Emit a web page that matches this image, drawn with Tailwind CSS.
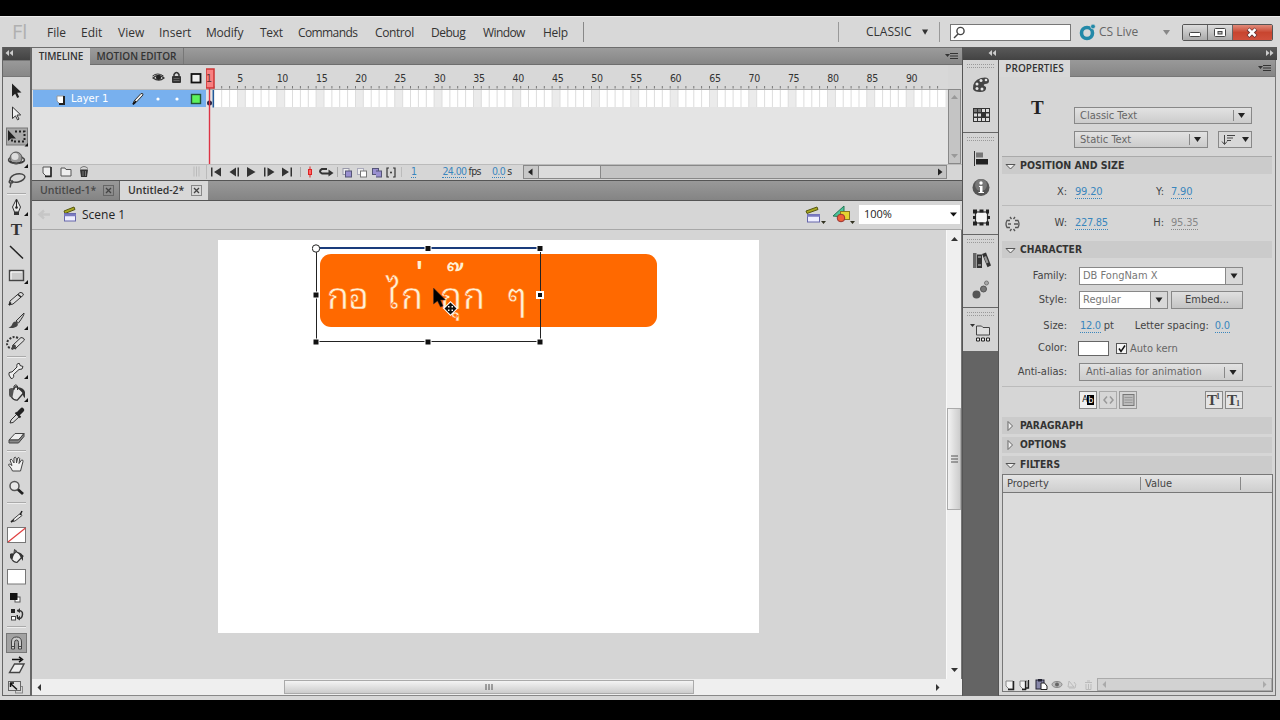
<!DOCTYPE html>
<html lang="en">
<head>
  <meta charset="UTF-8">
  <meta name="viewport" content="width=device-width, initial-scale=1.0">
  <script src="https://cdn.jsdelivr.net/npm/@tailwindcss/browser@4"></script>
  <title>Flash - Untitled-2</title>
</head>
<body class="w-[1280px] h-[720px] overflow-hidden bg-black pt-4 font-['DejaVu_Sans_Condensed','DejaVu_Sans',sans-serif] text-[11px] text-[#333]">

  <div class="h-[684px] bg-[#d8d8d8] border-t border-[#eee] flex flex-col">

    <!-- Menu bar -->
    <header class="h-[30px] shrink-0 flex items-center font-['Open_Sans','Noto_Sans',sans-serif] text-[12px] text-[#333]">
      <span class="w-[47px] pl-3 text-[20px] leading-none font-['Open_Sans',sans-serif] text-[#b0b0b0]">Fl</span>
      <nav class="flex items-center pt-px">
        <span class="w-[34px]">File</span>
        <span class="w-[37px]">Edit</span>
        <span class="w-[41px]">View</span>
        <span class="w-[47px]">Insert</span>
        <span class="w-[54px] tracking-[-0.2px]">Modify</span>
        <span class="w-[38px] tracking-[-0.3px]">Text</span>
        <span class="w-[77px] tracking-[-0.6px]">Commands</span>
        <span class="w-[56px] tracking-[-0.4px]">Control</span>
        <span class="w-[52px] tracking-[-0.5px]">Debug</span>
        <span class="w-[60px] tracking-[-0.6px]">Window</span>
        <span class="w-[40px] tracking-[-0.3px]">Help</span>
      </nav>
      <div class="w-px h-5 bg-[#888]"></div>
      <div class="ml-[254px] w-px h-5 bg-[#999]"></div>
      <span class="ml-[27px] w-[56px] -mt-px">CLASSIC</span>
      <svg class="w-[7px] h-[6px] -mt-px" viewBox="0 0 8 6"><path d="M0 0h7L3.500 6z" fill="#333"/></svg>
      <div class="ml-[10px] w-px h-5 bg-[#999]"></div>
      <div class="ml-[10px] w-[121px] h-[17px] bg-white border border-[#777]">
        <svg class="w-[16px] h-[15px]" viewBox="0 0 16 15" fill="none" stroke="#444" stroke-width="1.400"><circle cx="9.500" cy="6" r="3.600"/><path d="M7 9L3 13"/></svg>
      </div>
      <svg class="ml-[8px] w-[18px] h-[18px]" viewBox="0 0 18 18"><circle cx="8" cy="10" r="5.500" fill="none" stroke="#2389a8" stroke-width="3.600"/><circle cx="14" cy="3.500" r="2.400" fill="#2389a8" stroke="#d8d8d8" stroke-width=".8"/></svg>
      <span class="ml-[2px] w-[64px] text-[#666]">CS Live</span>
      <svg class="w-[7px] h-[5px]" viewBox="0 0 7 5"><path d="M0 0h7L3.500 5z" fill="#888"/></svg>
      <div class="ml-[12px] w-[91px] h-[17px] flex rounded-[2px] border border-[#555] overflow-hidden">
        <div class="w-[25px] border-r border-[#666] bg-linear-to-b from-[#ddd] to-[#aaa]"><svg class="w-[24px] h-[15px]" viewBox="0 0 24 15"><rect x="6.500" y="7.500" width="11" height="4" rx="1" fill="#fff" stroke="#444"/></svg></div>
        <div class="w-[25px] border-r border-[#666] bg-linear-to-b from-[#ddd] to-[#aaa]"><svg class="w-[24px] h-[15px]" viewBox="0 0 24 15"><rect x="6.500" y="3.500" width="11" height="8" rx="1" fill="#fff" stroke="#444"/><rect x="10" y="6.500" width="4" height="2.500" fill="#bbb" stroke="#444"/></svg></div>
        <div class="grow bg-linear-to-b from-[#e08a7a] via-[#c8452f] to-[#d0503c]"><svg class="w-[39px] h-[15px]" viewBox="0 0 39 15"><path d="M15 4L23 11.500M23 4L15 11.500" stroke="#633" stroke-width="4"/><path d="M15.500 4.200L22.500 11M22.500 4.200L15.500 11" stroke="#fff" stroke-width="2.500"/></svg></div>
      </div>
    </header>

    <div class="h-[649px] shrink-0 flex pl-[2px]">

      <!-- Tool panel -->
      <aside class="w-[29px] shrink-0 border-x border-b border-[#666] bg-[#d6d6d6] flex flex-col">
        <div class="h-[13px] shrink-0 bg-linear-to-b from-[#5a5a5a] to-[#434343]"><svg class="w-[14px] h-[12px]" viewBox="0 0 14 12"><path d="M6 3v6L2.500 6zM10 3v6L6.500 6z" fill="#ccc"/></svg></div>
        <div class="h-[17px] shrink-0 bg-linear-to-b from-[#999] to-[#888] border-y border-[#777]"></div>
        <div class="h-[3px] shrink-0"></div>
        <svg class="shrink-0 h-[22px] w-[27px]"><path d="M9 3.500v13l3.200-2.800 2 4.300 2-1-2-4.200 4.300-.3z" fill="#222"/></svg>
        <svg class="shrink-0 h-[23px] w-[27px]"><path d="M9.500 5v11.500l3-2.600 2 4 1.500-.8-2-4 3.700-.2z" fill="#eee" stroke="#333"/></svg>
        <svg class="shrink-0 h-[23px] w-[27px]"><rect x="3.500" y="3" width="21" height="17" fill="#aaa" stroke="#777"/><path d="M5 5v11l3-2.500h5z" fill="#222"/><path d="M12 6.500h9.500v10H9v-3" fill="none" stroke="#222" stroke-width="2" stroke-dasharray="2 2"/><path d="M25 18v3.500h-3.500z" fill="#111"/></svg>
        <svg class="shrink-0 h-[22px] w-[27px]"><ellipse cx="13.500" cy="12" rx="8" ry="3.500" fill="none" stroke="#444" stroke-width="1.500"/><circle cx="13" cy="10" r="6" fill="#999" stroke="#555"/><circle cx="12" cy="8.500" r="3.500" fill="#ddd"/><path d="M6 13q7 4 15 0" fill="none" stroke="#333"/><path d="M25 16v4h-4z" fill="#111"/></svg>
        <svg class="shrink-0 h-[22px] w-[27px]" fill="none" stroke="#444" stroke-width="1.500"><ellipse cx="14.500" cy="8" rx="7.500" ry="4" transform="rotate(-12 14.500 8)"/><path d="M7 10q-2 3 1 3t1-2.500M8 13q-.5 3-1 4.500"/></svg>
        <div class="h-[4px] shrink-0 flex items-center"><div class="mx-1 w-full border-t border-[#aaa] border-b border-b-[#eee]"></div></div>
        <svg class="shrink-0 h-[22px] w-[27px]"><path d="M13.500 3L9.500 11l2 5h4l2-5z" fill="#e6e6e6" stroke="#333"/><path d="M13.500 4v7" stroke="#222"/><circle cx="13.500" cy="11.500" r="1.300" fill="#222"/><rect x="11" y="16" width="5" height="3" fill="#333"/><path d="M25 16v4h-4z" fill="#111"/></svg>
        <div class="shrink-0 h-[23px] text-center font-['Liberation_Serif',serif] font-bold text-[17px] leading-[24px] text-[#333]">T</div>
        <svg class="shrink-0 h-[23px] w-[27px]"><path d="M7 5L20 17.500" stroke="#222" stroke-width="1.500"/></svg>
        <svg class="shrink-0 h-[23px] w-[27px]"><rect x="6.500" y="6.500" width="14" height="10" fill="#ccc" stroke="#444" stroke-width="1.400"/><path d="M8 15.500v-7.500h11" stroke="#fff" fill="none"/><path d="M25 16v4h-4z" fill="#111"/></svg>
        <svg class="shrink-0 h-[23px] w-[27px]"><path d="M6 18l1-4L17 5.500q3-.5 3.500 2.500L10 17z" fill="#ddd" stroke="#333"/><path d="M6 18l2-2.500M15 7.500l3 2.500" stroke="#222" stroke-width="1.500"/></svg>
        <svg class="shrink-0 h-[22px] w-[27px]"><path d="M13 11l8-8q.5 2-5.500 10z" fill="#ccc" stroke="#333"/><path d="M5.500 17.500q3-.5 4-4 2-3.500 5-1 1.500 4-3 5-3 1-6 0z" fill="#444"/><path d="M25 16v4h-4z" fill="#111"/></svg>
        <svg class="shrink-0 h-[23px] w-[27px]"><path d="M15 6q-5-2.500-9 1.500t0 8q4 2 7 .500" fill="none" stroke="#333" stroke-width="2" stroke-dasharray="2 1.500"/><path d="M9 17l1-4L18 5.500q3 0 3.500 2.500L13 16z" fill="#ddd" stroke="#333"/><circle cx="11" cy="14.500" r="2" fill="#444"/></svg>
        <div class="h-[4px] shrink-0 flex items-center"><div class="mx-1 w-full border-t border-[#aaa] border-b border-b-[#eee]"></div></div>
        <svg class="shrink-0 h-[22px] w-[27px]"><path d="M6 16q-1-3 2-3h1l5-5q-1-4 2.500-3.500l.5 2 3 1q0 3.500-4 3l-5.500 5q1 4-2.500 4z" fill="#eee" stroke="#333"/><path d="M25 16v4h-4z" fill="#111"/></svg>
        <svg class="shrink-0 h-[24px] w-[27px]"><path d="M7 11l6-5.500 8 6-6.500 7.500q-4 .5-6-3z" fill="#e4e4e4" stroke="#333" stroke-width="1.300"/><path d="M6 8q3-2 5 0l-1.500 8q-3 1-3.500-2z" fill="#555"/><path d="M15 6q6 1 7 5v6q-2-1-2.500-5z" fill="#333"/><path d="M11 9V5q2-2.500 3.500 0v4" fill="none" stroke="#333"/><path d="M25 17v4h-4z" fill="#111"/></svg>
        <svg class="shrink-0 h-[22px] w-[27px]"><path d="M7 18l1-3 6-6 2.500 2.500-6.500 6z" fill="#ddd" stroke="#333"/><path d="M12.500 7.500l5 5M15 9l4-4" stroke="#222" stroke-width="2"/><path d="M16 8l3-3" stroke="#222" stroke-width="4.500" stroke-linecap="round"/></svg>
        <svg class="shrink-0 h-[22px] w-[27px]"><path d="M6 13l6-6.500h9L15.500 13z" fill="#eee" stroke="#444"/><path d="M6 13h9.500l5.500-6.500v3L15.500 16H6z" fill="#888" stroke="#444"/></svg>
        <div class="h-[4px] shrink-0 flex items-center"><div class="mx-1 w-full border-t border-[#aaa] border-b border-b-[#eee]"></div></div>
        <svg class="shrink-0 h-[22px] w-[27px]"><path d="M9.500 18q-1-3-4-6 0-2 3.500.500L7 7q1-2 2.500.500L11 10V5q1.200-1.800 2.200 0l.3 5 1.200-5q1.500-1.200 2 .5L16 10.500 18.500 7q1.800-.5 1.500 1.500L17.500 18z" fill="#f2f2f2" stroke="#444"/></svg>
        <svg class="shrink-0 h-[25px] w-[27px]"><circle cx="11.500" cy="11" r="4.500" fill="#e8e8e8" stroke="#555" stroke-width="1.500"/><path d="M15 14.500l5 4.500" stroke="#222" stroke-width="2.800"/></svg>
        <div class="h-[6px] shrink-0 flex items-center"><div class="mx-1 w-full border-t border-[#aaa] border-b border-b-[#eee]"></div></div>
        <svg class="shrink-0 h-[20px] w-[27px]"><path d="M8 16l2-2.500 6.500-5.500q2-.500 2.500 1.500L12 15z" fill="#eee" stroke="#444"/><path d="M8 16l3-2.500M17 9l2-4" stroke="#222" stroke-width="1.500"/></svg>
        <svg class="shrink-0 h-[18px] w-[27px]"><rect x="4.500" y="1.500" width="18" height="15" fill="#fff" stroke="#777"/><path d="M5 16L22.500 2" stroke="#e04040" stroke-width="1.300"/></svg>
        <svg class="shrink-0 h-[24px] w-[27px]"><path d="M8 13l5-5.500 7 4.500-6 6.500q-3 0-5-3z" fill="#eee" stroke="#333" stroke-width="1.200"/><path d="M7 10q2-1.500 4 0l-1.500 5q-2.500.5-2.500-2zM15 8q4 1 5 4v5l-2-3z" fill="#333"/><path d="M11 9l.5-3.500 2.500 2" fill="none" stroke="#333"/></svg>
        <svg class="shrink-0 h-[17px] w-[27px]"><rect x="4.500" y="1.500" width="18" height="14.500" fill="#fff" stroke="#777"/></svg>
        <svg class="shrink-0 h-[24px] w-[27px]"><rect x="12" y="12" width="5" height="5" fill="#fff" stroke="#555"/><rect x="7" y="8" width="7.500" height="7" fill="#111"/></svg>
        <svg class="shrink-0 h-[12px] w-[27px] overflow-visible"><path d="M8 0h4v4H8z" fill="#222"/><rect x="8.500" y="7.500" width="4" height="3.500" fill="#fff" stroke="#444"/><path d="M13.500 6h1.500v4h-1z" fill="#222"/><path d="M14 1.500q6-.5 5.500 4t-4 4" fill="none" stroke="#333" stroke-width="1.500"/><path d="M14 2l3-3v5zM14 9.500l3-3v5z" fill="#333"/></svg>
        <div class="h-[12px] shrink-0 flex items-center"><div class="mx-1 w-full border-t border-[#aaa] border-b border-b-[#eee]"></div></div>
        <svg class="shrink-0 h-[21px] w-[27px]"><rect x="3.500" y=".5" width="20" height="19" fill="#a2a2a2" stroke="#777"/><path d="M8.500 16V9q0-5 5-5t5 5v7h-3V9.500q0-2.500-2-2.500t-2 2.500V16z" fill="#ccc" stroke="#444"/><path d="M8 13.500h4M15 13.500h4" stroke="#444"/></svg>
        <svg class="shrink-0 h-[24px] w-[27px]"><path d="M9 5.500h9M16 2.800l3.500 2.700L16 8.200" fill="none" stroke="#111" stroke-width="1.500"/><path d="M6.500 18.500l5-8.500h9.500l-4.500 8.500z" fill="#eee" stroke="#444" stroke-width="1.400"/></svg>
        <svg class="shrink-0 h-[18px] w-[27px]"><rect x="12.500" y="8.500" width="7" height="6.500" fill="none" stroke="#888"/><rect x="5.500" y="3.500" width="12" height="9" fill="#ddd" stroke="#666"/><path d="M8 6l6 5.500M7 5h4M7.500 5v4" stroke="#111" stroke-width="1.500"/></svg>
      </aside>
      <div class="w-[1px] shrink-0 bg-[#666]"></div>

      <!-- Timeline and document -->
      <main class="w-[930px] shrink-0 flex flex-col bg-[#d6d6d6]">
        <div class="h-[18px] shrink-0 flex bg-linear-to-b from-[#9c9c9c] to-[#868686] border-y border-[#6e6e6e] font-['Open_Sans',sans-serif] font-semibold text-[10px] leading-[17px] text-[#333]">
          <div class="w-[58px] h-[18px] bg-[#d8d8d8] text-center tracking-[-0.1px] whitespace-nowrap">TIMELINE</div>
          <div class="w-[94px] border-r border-[#777] text-center whitespace-nowrap">MOTION EDITOR</div>
          <svg class="ml-auto w-[20px] h-[16px]"><path d="M3 6h5l-2.500 3z" fill="#333"/><path d="M8 5.500h8M8 8h8M8 10.500h8" stroke="#333"/></svg>
        </div>

        <div class="h-[99px] shrink-0 flex">
          <!-- Layer list -->
          <div class="w-[174px] shrink-0 bg-[#e2e2e2]">
            <div class="h-[25px] bg-[#d8d8d8] border-b border-[#bbb]">
              <svg class="w-[174px] h-[24px]"><path d="M121 13q5-5 11 0-5 4.500-11 0z" fill="#ddd" stroke="#333" stroke-width="1.200"/><circle cx="126.500" cy="12.500" r="2.500" fill="#222"/><path d="M120.500 11q5-4 11 0" fill="none" stroke="#333"/><rect x="140" y="11" width="9" height="7" rx="1" fill="#333"/><path d="M142 11V9.500q2.500-4 5 0V11" fill="none" stroke="#333" stroke-width="1.500"/><path d="M141.500 13.500h6M141.500 15.500h6" stroke="#777" stroke-width=".7"/><rect x="159.500" y="9" width="9" height="8.500" fill="#eee" stroke="#111" stroke-width="1.800"/></svg>
            </div>
            <div class="h-[17px] flex items-center bg-[#78b0ee] ml-[1px] font-['DejaVu_Sans',sans-serif] text-[10px] text-white">
              <svg class="w-[38px] h-[17px]"><path d="M24 6h7v8h-4l-3-3z" fill="#fff" stroke="#999"/><path d="M31 6v8H26" stroke="#222" stroke-width="2" fill="none"/></svg>
              <span class="w-[60px]">Layer 1</span>
              <svg class="w-[75px] h-[17px]"><path d="M2 14l1-3L10 3.500q2.500-.5 2 1.500L5 12.500z" fill="#eee" stroke="#333"/><path d="M2 14.500l3-3.500" stroke="#111" stroke-width="1.800"/><circle cx="27" cy="9" r="1.600" fill="#fff"/><circle cx="46" cy="9" r="1.600" fill="#fff"/><rect x="60.500" y="4.500" width="9" height="9" fill="#5cf25c" stroke="#253" stroke-width="1.400"/></svg>
            </div>
          </div>
          <!-- Frames -->
          <div class="relative w-[742px] shrink-0 bg-[#e4e4e4] overflow-hidden">
            <div class="relative h-[25px] bg-[#d8d8d8] border-b border-[#aaa]">
              <div id="ruler" class="flex pl-[31.300px] pt-[6px] text-[10.500px] leading-[14px] text-[#333]"></div>
            </div>
            <svg id="frames" class="absolute left-0 top-0 w-[742px] h-[43px]"></svg>
            <svg class="absolute left-0 top-0 w-[20px] h-[99px]"><rect x="0" y="4" width="8" height="19" fill="#f88080" stroke="#cc3333" stroke-width="1.500"/><path d="M7.300 25v17.500" stroke="#235a9a" stroke-width="1.500"/><circle cx="3.500" cy="38" r="2.500" fill="#224"/><path d="M3.500 23v76" stroke="#dd3344" stroke-width="1.400"/></svg>
            <span class="absolute left-0 top-[6px] text-[10.500px] leading-[14px] text-[#633]">1</span>
          </div>
          <div class="w-[13px] h-[75px] mt-[24px] border border-[#888] bg-[#c4c4c4] flex flex-col justify-between items-center py-1">
            <svg class="w-[7px] h-[5px]"><path d="M0 5h7L3.500 1z" fill="#999"/></svg>
            <svg class="w-[7px] h-[5px]"><path d="M0 0h7L3.500 4z" fill="#999"/></svg>
          </div>
        </div>

        <!-- Timeline footer -->
        <div class="h-[16px] shrink-0 flex items-center border-t border-[#bbb]">
          <svg class="w-[344px] h-[15px] shrink-0 -mt-[2px]" fill="#333">
            <path d="M11 3h8v9h-5l-3-3z" fill="#eee" stroke="#555"/><path d="M19 3v9.500h-6" stroke="#222" stroke-width="1.500" fill="none"/>
            <path d="M29 4h4l1 1.500h5V12H29z" fill="#eee" stroke="#555"/>
            <path d="M48 5.500h8l-1 7.500h-6z"/><path d="M48 4.500q4-4 8 0M51 7v5M53.500 7v5" fill="none" stroke="#777"/>
            <path d="M162 2.500v10M164.500 2.500v10M167 2.500v10M174.500 0v15" stroke="#bbb"/>
            <path d="M179 3.500h1.500v9H179zM189 3.500v9L182 8zM204 3.500v9L197.500 8zM205.500 3.500h1.500v9h-1.500zM215 3v10l8.500-5zM232 3.500h1.500v9H232zM235.500 3.500v9l7-4.500zM250 3.500v9l7-4.500zM258.500 3.500h1.500v9h-1.500z"/>
            <path d="M268.500 3v10M305.500 3v10" stroke="#aaa"/>
            <path d="M278 2.500v11" stroke="#d22"/><rect x="276.500" y="5.500" width="3" height="5" fill="#f66" stroke="#d22"/>
            <path d="M295 5h-5q-4 2 0 4.500h8" fill="none" stroke="#333" stroke-width="2"/><path d="M296.500 5.500v7l5-3.500z"/>
            <rect x="311" y="4.500" width="6" height="6" fill="#eee" stroke="#99a"/><rect x="313.500" y="7" width="6" height="6" fill="#9a90d0" stroke="#557"/>
            <rect x="325.500" y="4.500" width="6" height="6" fill="#eee" stroke="#aab"/><rect x="328.500" y="7" width="6" height="6" fill="#fff" stroke="#777"/>
            <rect x="340.500" y="4.500" width="6" height="6" fill="#9a90d0" stroke="#557"/>
          </svg>
          <svg class="w-[36px] h-[15px] shrink-0 -mt-[2px]"><rect x="-3.500" y="4.500" width="6" height="6" fill="#9a90d0" stroke="#557"/><rect x="-.5" y="7" width="6" height="6" fill="#9a90d0" stroke="#557"/><path d="M13 4h-2v9h2M17 4h2v9h-2" fill="none" stroke="#333" stroke-width="1.200"/><circle cx="15" cy="8.500" r="1" fill="#333"/><path d="M25.500 3v10" stroke="#bbb"/></svg>
          <div class="w-[111px] flex -mt-[2px] leading-[12px] text-[10.500px] text-[#3a86bd] tracking-[-0.6px] whitespace-nowrap">
            <span class="border-b border-dotted ml-[-1px]">1</span>
            <span class="ml-[26px] border-b border-dotted">24.00</span><span class="text-[#333] ml-[2px]">fps</span>
            <span class="ml-[11px] border-b border-dotted">0.0</span><span class="text-[#333] ml-[2px]">s</span>
          </div>
          <div class="w-[424px] h-[14px] flex bg-[#c4c4c4] border border-[#888] -mt-px">
            <svg class="w-[14px] h-[12px] bg-[#c8c8c8]"><path d="M8.500 2.500v7L4 6z" fill="#222"/></svg>
            <div class="w-[63px] border-x border-[#888] bg-[#dcdcdc]"></div>
            <svg class="ml-auto w-[10px] h-[12px]"><path d="M2 2.500v7L6.500 6z" fill="#222"/></svg>
          </div>
        </div>

        <!-- Document tabs -->
        <div class="h-[21px] shrink-0 flex bg-linear-to-b from-[#999] to-[#848484] border-y border-[#555] font-['Open_Sans',sans-serif] font-semibold text-[10.500px] leading-[19px] text-[#333]">
          <div class="w-[88px] flex items-center pl-[8px] border-r border-[#666] text-[#484848]"><span class="w-[63px] whitespace-nowrap">Untitled-1*</span>
            <svg class="w-[11px] h-[11px]"><rect x=".5" y=".5" width="10" height="10" fill="none" stroke="#666"/><path d="M3 3l5 5M8 3L3 8" stroke="#444" stroke-width="1.300"/></svg></div>
          <div class="w-[88px] flex items-center pl-[8px] bg-[#d8d8d8]"><span class="w-[63px] whitespace-nowrap">Untitled-2*</span>
            <svg class="w-[11px] h-[11px]"><rect x=".5" y=".5" width="10" height="10" fill="none" stroke="#888"/><path d="M3 3l5 5M8 3L3 8" stroke="#444" stroke-width="1.300"/></svg></div>
        </div>

        <!-- Edit bar -->
        <div class="h-[29px] shrink-0 flex items-center border-b border-[#a8a8a8] font-['Open_Sans',sans-serif] text-[12px] text-[#222]">
          <svg class="w-[50px] h-[20px]"><path d="M8 9.500h10M12 5.500l-4.500 4L12 13.500" fill="none" stroke="#c6c6c6" stroke-width="2.500"/><path d="M32 6l10-4 1 2.500-10 4z" fill="#a8a820" stroke="#551"/><rect x="32.500" y="8.500" width="11" height="7.500" fill="#eef" stroke="#66a"/><path d="M32 10h12" stroke="#7a7ac0" stroke-width="2.500"/></svg>
          <span class="w-[722px]">Scene 1</span>
          <svg class="w-[55px] h-[22px]"><path d="M2 7l11-4 1 2.500-11 4z" fill="#a8a820" stroke="#551"/><rect x="3.500" y="10.500" width="12" height="7.500" fill="#eef" stroke="#66a"/><path d="M3 11.500h13" stroke="#7a7ac0" stroke-width="2.500"/><path d="M17 17h5l-2.500 3zM46 17h5l-2.500 3z" fill="#332"/><path d="M29 12L40 2v11z" fill="#4cc49a" stroke="#275"/><rect x="36.500" y="7.500" width="9" height="8" fill="#e4d430" stroke="#872"/><circle cx="37" cy="14" r="3.800" fill="#f06038" stroke="#933"/></svg>
          <div class="w-[101px] h-[19px] -mt-px bg-white flex items-center justify-between pl-[5px] pr-[3px] pb-[3px] text-[11px] leading-none">100%<svg class="w-[7px] h-[5px] mt-[3px]"><path d="M0 .500h7L3.500 4.500z" fill="#111"/></svg></div>
        </div>

        <!-- Work area -->
        <div class="h-[449px] shrink-0 flex">
          <div class="relative w-[914px] shrink-0 bg-[#d5d5d5]">
            <div class="absolute left-[186px] top-[10px] w-[541px] h-[393px] bg-white"></div>
            <div class="absolute left-[288px] top-[24px] w-[337px] h-[73px] rounded-[11px] bg-[#ff6900]"></div>
            <!-- Tone marks sit well above the letters in this typeface -->
            <svg class="absolute left-[280px] top-[10px] w-[240px] h-[110px]" font-family="'Noto Sans Thai Looped','Noto Sans Thai','Loma','Waree',sans-serif" font-size="36" fill="#fff0d4" stroke="#ff6900" stroke-width=".5">
              <text><tspan x="15 36" y="69">กอ</tspan><tspan x="74 89" y="69">ไก</tspan><tspan x="103" y="53" stroke="none">&#160;่</tspan><tspan x="128" y="69">กุ</tspan><tspan x="151" y="69">ก</tspan><tspan x="142" y="55" stroke="none">&#160;๊</tspan><tspan x="195" y="69">ๆ</tspan></text>
            </svg>
            <svg class="absolute left-[280px] top-[10px] w-[240px] h-[110px]">
              <path d="M4 8h224" stroke="#1a3c7c" stroke-width="2"/>
              <path d="M4.500 8v93.500h224V8" fill="none" stroke="#222" stroke-width="1"/>
              <g fill="#111" stroke="#fff"><rect x="113" y="5.500" width="6" height="6"/><rect x="225" y="5.500" width="6" height="6"/><rect x="1" y="52" width="6" height="6"/><rect x="225" y="52" width="6" height="6" stroke-width="2"/><rect x="1" y="99" width="6" height="6"/><rect x="113" y="99" width="6" height="6"/><rect x="225" y="99" width="6" height="6"/></g>
              <circle cx="4" cy="8.500" r="3.700" fill="#fff" stroke="#222"/>
              <path d="M121.500 48v16l4-3 3 6 2.500-1-2.500-6h5z" fill="#000" stroke="#433" stroke-width=".5"/>
              <path d="M138.500 62.500l3.500 3.500h-2.500v1.500h1.500V65l3.500 3.500-3.500 3.500v-2.500h-1.500v1.500h2.500l-3.500 3.500-3.500-3.500h2.500v-1.500H136V72l-3.500-3.500L136 65v2.500h1.500V66H135z" fill="#111" stroke="#fff" stroke-width="2" paint-order="stroke"/>
            </svg>
          </div>
          <div class="w-[15px] shrink-0 bg-[#efefef] border-l border-[#f8f8f8] flex flex-col items-center">
            <svg class="w-[7px] h-[5px] mt-[6px]"><path d="M0 5h7L3.500 1z" fill="#333"/></svg>
            <div class="mt-[167px] w-[14px] h-[102px] shrink-0 border border-[#aaa] bg-linear-to-r from-[#f2f2f2] to-[#ccc] flex items-center justify-center"><svg class="w-[7px] h-[8px]"><path d="M0 1h7M0 4h7M0 7h7" stroke="#555"/></svg></div>
            <svg class="w-[7px] h-[5px] mt-[157px]"><path d="M0 1h7L3.500 5z" fill="#333"/></svg>
          </div>
          <div class="w-px bg-[#777]"></div>
        </div>
        <div class="h-[17px] shrink-0 flex items-center bg-[#efefef] border-b border-[#888]">
          <svg class="w-[252px] h-[9px]"><path d="M9 1v7L5.500 4.500z" fill="#333"/></svg>
          <div class="w-[410px] h-[14px] border border-[#aaa] bg-linear-to-b from-[#f4f4f4] to-[#ccc] flex items-center justify-center"><svg class="w-[8px] h-[6px]"><path d="M1 0v6M4 0v6M7 0v6" stroke="#555"/></svg></div>
          <svg class="w-[250px] h-[9px]"><path d="M242 1v7l3.500-3.500z" fill="#333"/></svg>
        </div>
      </main>

      <!-- Right side panels -->
      <div class="w-[315px] shrink-0 flex flex-col border-l border-[#555]">
        <div class="h-[13px] shrink-0 bg-linear-to-b from-[#5a5a5a] to-[#434343] flex justify-between px-[24px] pr-[2px]">
          <svg class="w-[12px] h-[12px]"><path d="M5 3v6L1.500 6zM9 3v6L5.500 6z" fill="#ccc"/></svg>
          <svg class="w-[12px] h-[12px]"><path d="M3 3v6l3.500-3zM7 3v6l3.500-3z" fill="#ccc"/></svg>
        </div>
        <div class="grow flex">
          <!-- Icon dock -->
          <div class="w-[36px] shrink-0 bg-[#646464] border-r border-[#555] flex flex-col">
            <div class="h-[73px] shrink-0 bg-[#d4d4d4] border-b border-[#666] flex flex-col items-center pt-[4px]">
              <div class="w-[27px] h-[4px] border-y border-dotted border-[#999]"></div>
              <svg class="w-[24px] h-[30px] mt-[2px]"><path d="M4 19q-1-8 8-11 8-2 8 3 0 3-4 3-3 1 1 3 1 5-6 5-6 0-7-3z" fill="#444"/><g fill="#e6e6e6"><circle cx="8" cy="14" r="1.500"/><circle cx="12" cy="10.500" r="1.500"/><circle cx="17" cy="10" r="1.300"/><circle cx="8" cy="18.500" r="1.500"/><circle cx="13" cy="19" r="1.500"/></g></svg>
              <svg class="w-[24px] h-[30px]"><rect x="4" y="8" width="17" height="14" fill="#333"/><g fill="#777"><path d="M5 9h3v3H5zM9 9h3v3H9z"/></g><g fill="#ddd"><path d="M13 9h3v3h-3zM17 9h3v3h-3zM5 13.500h3v3H5zM9 13.500h3v3H9zM17 13.500h3v3h-3zM5 18h3v3H5zM9 18h3v3H9zM13 18h3v3h-3zM17 18h3v3h-3z"/></g></svg>
            </div>
            <div class="h-[102px] shrink-0 bg-[#d4d4d4] border-b border-[#666] flex flex-col items-center pt-[4px]">
              <div class="w-[27px] h-[4px] border-y border-dotted border-[#999]"></div>
              <svg class="w-[24px] h-[28px] mt-[2px]"><path d="M5.500 8v15" stroke="#333"/><path d="M7 9.500h7v5H7z" fill="#777"/><path d="M7 16h12v5.500H7z" fill="#222"/></svg>
              <svg class="w-[24px] h-[30px]"><circle cx="12" cy="16.500" r="8.500" fill="#555"/><circle cx="12" cy="14" r="6" fill="#777"/><path d="M10 15h3.500v6H15v1H9.500v-1H11v-5h-1z" fill="#fff"/><circle cx="12" cy="12" r="1.700" fill="#fff"/></svg>
              <svg class="w-[24px] h-[30px]"><rect x="6.500" y="11" width="12" height="11" fill="#f6f6f6" stroke="#333" stroke-width="1.200"/><path d="M4 8.500h4v4H4zM10.500 8.500h4v3h-4zM17 8.500h3v4h-3zM4 20.500h4v4H4zM10.500 21.500h4v3h-4zM17 20.500h3v4h-3zM4 15h3v3H4zM18 15h3v3h-3z" fill="#222"/></svg>
            </div>
            <div class="h-[73px] shrink-0 bg-[#d4d4d4] border-b border-[#666] flex flex-col items-center pt-[4px]">
              <div class="w-[27px] h-[4px] border-y border-dotted border-[#999]"></div>
              <svg class="w-[24px] h-[30px] mt-[2px]"><path d="M4 8h3.500v15H4z" fill="#666"/><path d="M8 9.500h5V23H8z" fill="#333"/><path d="M13 9l4-1.500 5 13-3.500 1.800z" fill="#333"/><path d="M15 12l2-1 2.500 6.500-2 1z" fill="#999"/><path d="M9 12h3M9 20h3" stroke="#ccc"/></svg>
              <svg class="w-[24px] h-[30px]"><circle cx="7.500" cy="19.500" r="4" fill="#555"/><circle cx="14.500" cy="14" r="3" fill="#777" stroke="#555"/><circle cx="17.500" cy="8" r="2" fill="#aaa" stroke="#777"/></svg>
            </div>
            <div class="h-[43px] shrink-0 bg-[#d4d4d4] flex flex-col items-center pt-[4px]">
              <div class="w-[27px] h-[4px] border-y border-dotted border-[#999]"></div>
              <svg class="w-[28px] h-[30px] mt-[3px]"><path d="M3 5h5l-2.500 3z" fill="#333"/><path d="M9.500 7h5l1.500 1.500h6.500V16h-13z" fill="#ddd" stroke="#444"/><path d="M9.500 19h3v3h-3zM14.500 19h3v3h-3zM19.500 19h3v3h-3z" fill="#eee" stroke="#222"/></svg>
            </div>
          </div>

          <!-- Properties -->
          <section class="w-[277px] shrink-0 flex flex-col bg-[#d6d6d6] border-r border-b border-[#777]">
            <div class="h-[17px] shrink-0 flex bg-linear-to-b from-[#999] to-[#868686] border-b border-[#777]">
              <div class="w-[71px] h-[17px] bg-[#d8d8d8] text-center font-['Open_Sans',sans-serif] font-semibold text-[10px] leading-[17px]">PROPERTIES</div>
              <svg class="ml-auto w-[20px] h-[16px]"><path d="M3 6h5l-2.500 3z" fill="#333"/><path d="M8 5.500h8M8 8h8M8 10.500h8" stroke="#333"/></svg>
            </div>

            <div class="h-[79px] shrink-0 flex">
              <div class="w-[75px] pl-[32px] pt-[17px] font-['Liberation_Serif',serif] font-bold text-[19px] text-[#222]">T</div>
              <div class="flex flex-col gap-[7px] pt-[30px] text-[#666]">
                <div class="w-[178px] h-[17px] flex items-center border border-[#888] bg-linear-to-b from-[#e2e2e2] to-[#ccc] pl-[5px]"><span class="grow pt-px">Classic Text</span><svg class="w-[18px] h-[15px]"><path d="M.500 2v11" stroke="#888"/><path d="M5 5h7L8.500 10z" fill="#222"/></svg></div>
                <div class="flex gap-[10px]">
                  <div class="w-[134px] h-[17px] flex items-center border border-[#888] bg-linear-to-b from-[#e2e2e2] to-[#ccc] pl-[5px]"><span class="grow pt-px">Static Text</span><svg class="w-[18px] h-[15px]"><path d="M.500 2v11" stroke="#888"/><path d="M5 5h7L8.500 10z" fill="#222"/></svg></div>
                  <svg class="w-[34px] h-[17px] border border-[#888] bg-[#d8d8d8]"><path d="M5.500 3v9M3 9.500l2.500 3 2.500-3M8 3.500h8M8 6h6M8 8.500h4" fill="none" stroke="#444"/><path d="M23 5h7L26.500 10z" fill="#222"/></svg>
                </div>
              </div>
            </div>

            <div class="h-[18px] shrink-0 mx-[3px] flex items-center bg-[#cbcbcb] border-t border-[#aaa] font-['DejaVu_Sans_Condensed',sans-serif] font-bold text-[10.500px] text-[#333]">
              <svg class="w-[18px] h-[12px]"><path d="M4 4.500h9L8.500 9z" fill="#eee" stroke="#555"/></svg>POSITION AND SIZE</div>
            <div class="h-[32px] pt-[5px] shrink-0 mx-[3px] flex items-center border-b border-[#bbb] text-[#444]">
              <span class="w-[65px] text-right">X:</span><span class="ml-[8px] leading-[12px] border-b border-dotted text-[#3a86bd] tracking-[-0.2px]">99.20</span>
              <span class="ml-auto w-[30px] text-right">Y:</span><span class="ml-[7px] w-[101px]"><span class="inline-block leading-[12px] border-b border-dotted text-[#3a86bd] tracking-[-0.2px]">7.90</span></span>
            </div>
            <div class="h-[35px] shrink-0 mx-[3px] flex items-center text-[#444]">
              <svg class="w-[20px] h-[16px]" fill="none" stroke="#555" stroke-width="1.300"><path d="M8 4.500H5q-2 3.500 0 7h3M6 8h3M13 4.500h3q2 3.500 0 7h-3M12 8h4M8 1l1.500 2M13 1l-1.500 2M8 15l1.500-2M13 15l-1.500-2"/></svg>
              <span class="w-[45px] text-right">W:</span><span class="ml-[8px] leading-[12px] border-b border-dotted text-[#3a86bd] tracking-[-0.3px]">227.85</span>
              <span class="ml-auto w-[30px] text-right">H:</span><span class="ml-[7px] w-[101px]"><span class="inline-block leading-[12px] border-b border-dotted text-[#888] tracking-[-0.2px]">95.35</span></span>
            </div>

            <div class="h-[17px] shrink-0 mx-[3px] flex items-center bg-[#cbcbcb] font-['DejaVu_Sans_Condensed',sans-serif] font-bold text-[10.200px] text-[#333]">
              <svg class="w-[18px] h-[12px]"><path d="M4 4.500h9L8.500 9z" fill="#eee" stroke="#555"/></svg>CHARACTER</div>
            <div class="h-[129px] shrink-0 mx-[3px] border-b border-[#bbb] text-[#444] pt-[6px]">
              <div class="h-[24px] flex items-center gap-[12px]"><span class="w-[65px] text-right">Family:</span>
                <div class="w-[164px] h-[18px] flex items-center bg-white border border-[#888] text-[#777]"><span class="grow pl-[3px]">DB FongNam X</span><svg class="w-[17px] h-[16px] bg-[#d8d8d8] border-l border-[#888]"><path d="M4.500 5.500h7L8 10.500z" fill="#222"/></svg></div></div>
              <div class="h-[24px] flex items-center gap-[12px]"><span class="w-[65px] text-right">Style:</span>
                <div class="flex gap-[3px]">
                  <div class="w-[89px] h-[18px] flex items-center bg-white border border-[#888] text-[#777]"><span class="grow pl-[3px]">Regular</span><svg class="w-[17px] h-[16px] bg-[#d8d8d8] border-l border-[#888]"><path d="M4.500 5.500h7L8 10.500z" fill="#222"/></svg></div>
                  <div class="w-[72px] h-[18px] border border-[#888] bg-linear-to-b from-[#e0e0e0] to-[#c4c4c4] text-center leading-[16px]">Embed...</div>
                </div></div>
              <div class="h-[28px] flex items-center"><span class="w-[65px] text-right">Size:</span>
                <span class="ml-[13px] leading-[12px] border-b border-dotted text-[#3a86bd] tracking-[-0.3px]">12.0</span><span class="ml-[3px] w-[31px]">pt</span>
                <span class="w-[80px] whitespace-nowrap">Letter spacing:</span><span class="leading-[12px] border-b border-dotted text-[#3a86bd] tracking-[-0.3px]">0.0</span></div>
              <div class="h-[17px] flex items-center"><span class="w-[65px] text-right">Color:</span>
                <div class="ml-[11px] w-[31px] h-[15px] bg-white border border-[#666]"></div>
                <svg class="ml-[7px] w-[11px] h-[11px] bg-[#f4f4f4] border border-[#555]"><path d="M2 4.500l2 3L8 1.500" fill="none" stroke="#111" stroke-width="1.500"/></svg><span class="ml-[3px] pt-px text-[#666]">Auto kern</span></div>
              <div class="h-[30px] flex items-center gap-[12px]"><span class="w-[65px] text-right whitespace-nowrap">Anti-alias:</span>
                <div class="w-[164px] h-[18px] flex items-center border border-[#888] bg-linear-to-b from-[#e2e2e2] to-[#ccc] text-[#666]"><span class="grow pl-[6px] whitespace-nowrap">Anti-alias for animation</span><svg class="w-[18px] h-[15px]"><path d="M.500 2v11" stroke="#888"/><path d="M5.500 5h7L9 10z" fill="#222"/></svg></div></div>
            </div>
            <div class="h-[30px] shrink-0 flex pt-[4px] pl-[80px] gap-[2px]">
              <div class="w-[18px] h-[18px] border border-[#888] bg-[#eee] flex items-center justify-center text-[9px] tracking-[-0.5px] text-[#111]">A<span class="bg-black text-white leading-[10px] px-[1px]">b</span></div>
              <svg class="w-[18px] h-[18px] border border-[#aaa]"><path d="M7 4.500L4 8l3 3.500M10 4.500L13 8l-3 3.500" fill="none" stroke="#999" stroke-width="1.500"/></svg>
              <svg class="w-[18px] h-[18px] border border-[#999]"><rect x="3" y="2.500" width="11" height="11" fill="#bbb" stroke="#777"/><path d="M4.500 5.500h8M4.500 8h8M4.500 10.500h8" stroke="#999"/></svg>
              <div class="ml-[66px] w-[18px] h-[18px] border border-[#888] bg-[#e4e4e4] font-['Liberation_Serif',serif] font-bold text-[15px] leading-[17px] pl-[1px] flex text-[#444]">T<span class="text-[8px] leading-[9px] -ml-px">1</span></div>
              <div class="w-[18px] h-[18px] border border-[#888] bg-[#e4e4e4] font-['Liberation_Serif',serif] font-bold text-[15px] leading-[17px] pl-[1px] flex text-[#444]">T<span class="text-[8px] leading-[24px] -ml-px">1</span></div>
            </div>

            <div class="flex flex-col gap-[3px] shrink-0 mx-[3px] font-['DejaVu_Sans_Condensed',sans-serif] font-bold text-[10.200px] text-[#333]">
              <div class="h-[17px] flex items-center bg-[#cbcbcb]"><svg class="w-[18px] h-[14px]"><path d="M6 2.500v9l4.500-4.500z" fill="#eee" stroke="#666"/></svg>PARAGRAPH</div>
              <div class="h-[16px] flex items-center bg-[#cbcbcb]"><svg class="w-[18px] h-[14px]"><path d="M6 2.500v9l4.500-4.500z" fill="#eee" stroke="#666"/></svg>OPTIONS</div>
              <div class="h-[18px] flex items-center bg-[#cbcbcb]"><svg class="w-[18px] h-[12px]"><path d="M4 4.500h9L8.500 9z" fill="#eee" stroke="#555"/></svg>FILTERS</div>
            </div>

            <div class="h-[218px] shrink-0 ml-[3px] w-[271px] border border-[#777] bg-[#dcdcdc] flex flex-col text-[#444]">
              <div class="h-[18px] shrink-0 flex items-center border-b border-[#777] bg-linear-to-b from-[#e4e4e4] to-[#cecece] leading-[13px]">
                <span class="w-[138px] pl-[4px] border-r border-[#888]">Property</span><span class="w-[100px] pl-[4px] border-r border-[#888]">Value</span>
              </div>
              <div class="grow"></div>
              <div class="h-[13px] shrink-0 flex">
                <svg class="w-[94px] h-[13px]"><path d="M3 3h7v8H6L3 8z" fill="#f4f4f4" stroke="#888"/><path d="M10.500 3v8.500H5" fill="none" stroke="#222" stroke-width="1.500"/><path d="M17 3h7v8h-4l-3-3z" fill="#f4f4f4" stroke="#888"/><path d="M22.500 3v8.500H19M25.500 2v8h-3" fill="none" stroke="#222" stroke-width="1.300"/><rect x="33" y="2" width="8" height="9" fill="#88a" stroke="#223"/><rect x="35" y="1" width="4" height="2.500" fill="#223"/><path d="M38 5h3.500l2.500 3v3.500h-6z" fill="#fff" stroke="#222"/><ellipse cx="54" cy="6.500" rx="5" ry="3" fill="#bbb" stroke="#888"/><circle cx="54" cy="6.500" r="2" fill="#666"/><path d="M66 3l5 6H65zM71 4q3 2 1 6h-6" fill="none" stroke="#bbb"/><path d="M82 4.500h7M84 3h3M83 6v5.500h5V6M85.500 6v5" fill="none" stroke="#bbb"/></svg>
                <div class="grow flex justify-between border border-[#aaa] bg-[#d2d2d2]"><svg class="w-[12px] h-[11px]"><path d="M8 2v7L4.500 5.500z" fill="#aaa"/></svg><svg class="w-[10px] h-[11px]"><path d="M2 2v7l3.500-3.500z" fill="#aaa"/></svg></div>
              </div>
            </div>
          </section>
        </div>
      </div>
    </div>
  </div>

  <script>
    const FRAME = 7.867;

    // frame numbers, one label every five frames
    const ruler = document.getElementById('ruler');
    for (let n = 5; n <= 90; n += 5) {
      const label = document.createElement('span');
      label.className = 'shrink-0 tracking-[-0.3px]';
      label.style.width = FRAME * 5 + 'px';
      label.textContent = n;
      ruler.appendChild(label);
    }

    // ticks and frame cells
    let cells = '';
    for (let i = 1; i < 94; i++) {
      const x = (i * FRAME).toFixed(1);
      const fill = (i + 1) % 5 === 0 ? '#ebebeb' : '#ffffff';
      cells += `<rect x="${x}" y="25" width="${FRAME}" height="17" fill="${fill}"/>`;
      cells += `<path d="M${x} 21v2.500" stroke="#777"/><path d="M${x} 25v17" stroke="#ddd"/>`;
    }
    document.getElementById('frames').innerHTML = cells;
  </script>
</body>
</html>
